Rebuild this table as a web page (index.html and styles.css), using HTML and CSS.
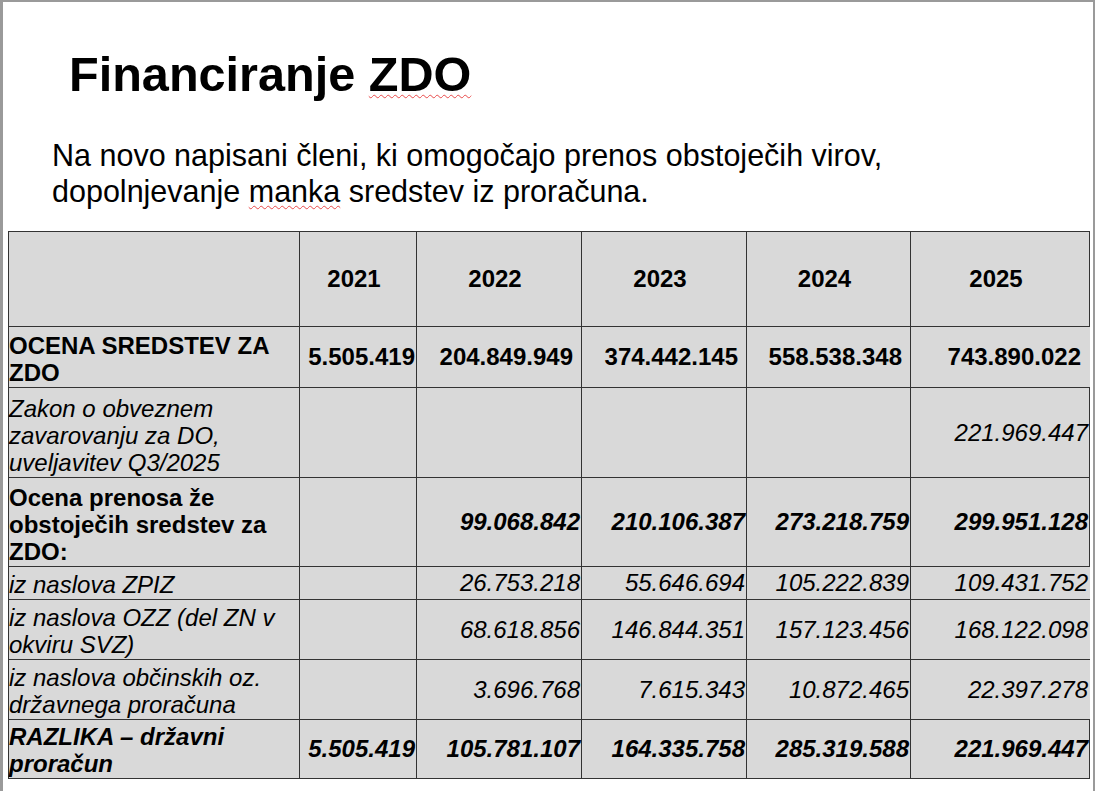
FILE: index.html
```html
<!DOCTYPE html>
<html lang="sl">
<head>
<meta charset="utf-8">
<title>Financiranje ZDO</title>
<link rel="stylesheet" href="styles.css">
</head>
<body>
<div class="slide">
  <h1 class="title">Financiranje <span class="spell">ZDO</span></h1>
  <p class="lead">Na novo napisani členi, ki omogočajo prenos obstoječih virov,<br>dopolnjevanje <span class="spell">manka</span> sredstev iz proračuna.</p>
  <table class="fin">
    <colgroup>
      <col class="c-label">
      <col class="c-2021">
      <col class="c-mid">
      <col class="c-mid">
      <col class="c-2024">
      <col class="c-2025">
    </colgroup>
    <tr class="r-head">
      <th></th><th>2021</th><th>2022</th><th>2023</th><th>2024</th><th>2025</th>
    </tr>
    <tr class="r-total open">
      <td class="lbl b">OCENA SREDSTEV ZA ZDO</td>
      <td class="num first">5.505.419</td><td class="num">204.849.949</td><td class="num">374.442.145</td><td class="num">558.538.348</td><td class="num">743.890.022</td>
    </tr>
    <tr class="r-zakon it">
      <td class="lbl">Zakon o obveznem zavarovanju za DO, uveljavitev Q3/2025</td>
      <td></td><td></td><td></td><td></td><td class="num">221.969.447</td>
    </tr>
    <tr class="r-prenos bi">
      <td class="lbl b up">Ocena prenosa že obstoječih sredstev za ZDO:</td>
      <td></td><td class="num">99.068.842</td><td class="num">210.106.387</td><td class="num">273.218.759</td><td class="num">299.951.128</td>
    </tr>
    <tr class="r-one it open">
      <td class="lbl">iz naslova ZPIZ</td>
      <td></td><td class="num">26.753.218</td><td class="num">55.646.694</td><td class="num">105.222.839</td><td class="num">109.431.752</td>
    </tr>
    <tr class="r-two it open">
      <td class="lbl">iz naslova OZZ (del ZN v okviru SVZ)</td>
      <td></td><td class="num">68.618.856</td><td class="num">146.844.351</td><td class="num">157.123.456</td><td class="num">168.122.098</td>
    </tr>
    <tr class="r-two it open">
      <td class="lbl">iz naslova občinskih oz. državnega proračuna</td>
      <td></td><td class="num">3.696.768</td><td class="num">7.615.343</td><td class="num">10.872.465</td><td class="num">22.397.278</td>
    </tr>
    <tr class="r-last bi">
      <td class="lbl">RAZLIKA – državni proračun</td>
      <td class="num">5.505.419</td><td class="num">105.781.107</td><td class="num">164.335.758</td><td class="num">285.319.588</td><td class="num">221.969.447</td>
    </tr>
  </table>
</div>
</body>
</html>
```

FILE: styles.css
```css
html, body {
  margin: 0;
  padding: 0;
  background: #ffffff;
}

body {
  font-family: "Liberation Sans", Arial, sans-serif;
  color: #000000;
  overflow: hidden;
}

.slide {
  box-sizing: border-box;
  width: 1095px;
  height: 791px;
  border-style: solid;
  border-color: #9a9a9a;
  border-width: 2px 2px 0 3px;
  padding: 44px 0 0 5px;
  background: #ffffff;
}

.title {
  margin: 0 0 0 61px;
  font-size: 48.6px;
  line-height: 56px;
  font-weight: 700;
}

.spell {
  text-decoration: underline wavy #e84a4a;
  text-decoration-thickness: 1px;
  text-underline-offset: 3px;
}

.lead {
  margin: 35px 0 0 44px;
  font-size: 30.5px;
  line-height: 36px;
}

.fin {
  margin-top: 22px;
  border-collapse: collapse;
  table-layout: fixed;
  width: 1081px;
  font-size: 24px;
  line-height: 26px;
}

.c-label { width: 291px; }
.c-2021 { width: 117px; }
.c-mid { width: 165px; }
.c-2024 { width: 164px; }
.c-2025 { width: 179px; }

.fin th,
.fin td {
  background: #d9d9d9;
  border: 1px solid #333333;
  padding: 0 1px;
  vertical-align: middle;
}

.fin th {
  font-weight: 700;
  text-align: center;
  padding-right: 9px;
}

.r-head { height: 95px; }
.r-total { height: 61px; }
.r-zakon { height: 90px; }
.r-prenos { height: 89px; }
.r-one { height: 33px; }
.r-two { height: 60px; }
.r-last { height: 59px; }

.open td:last-child {
  border-right-color: #d9d9d9;
}

.fin td.lbl {
  text-align: left;
  vertical-align: bottom;
  line-height: 27px;
  padding: 0 0 1px 0;
}

.num {
  text-align: right;
  white-space: nowrap;
}

.r-total td {
  font-weight: 700;
  padding-right: 8px;
}

.r-total td.first {
  padding-right: 1px;
}

.it td {
  font-style: italic;
}

.bi td {
  font-weight: 700;
  font-style: italic;
}

.bi td.up {
  font-style: normal;
}
```
